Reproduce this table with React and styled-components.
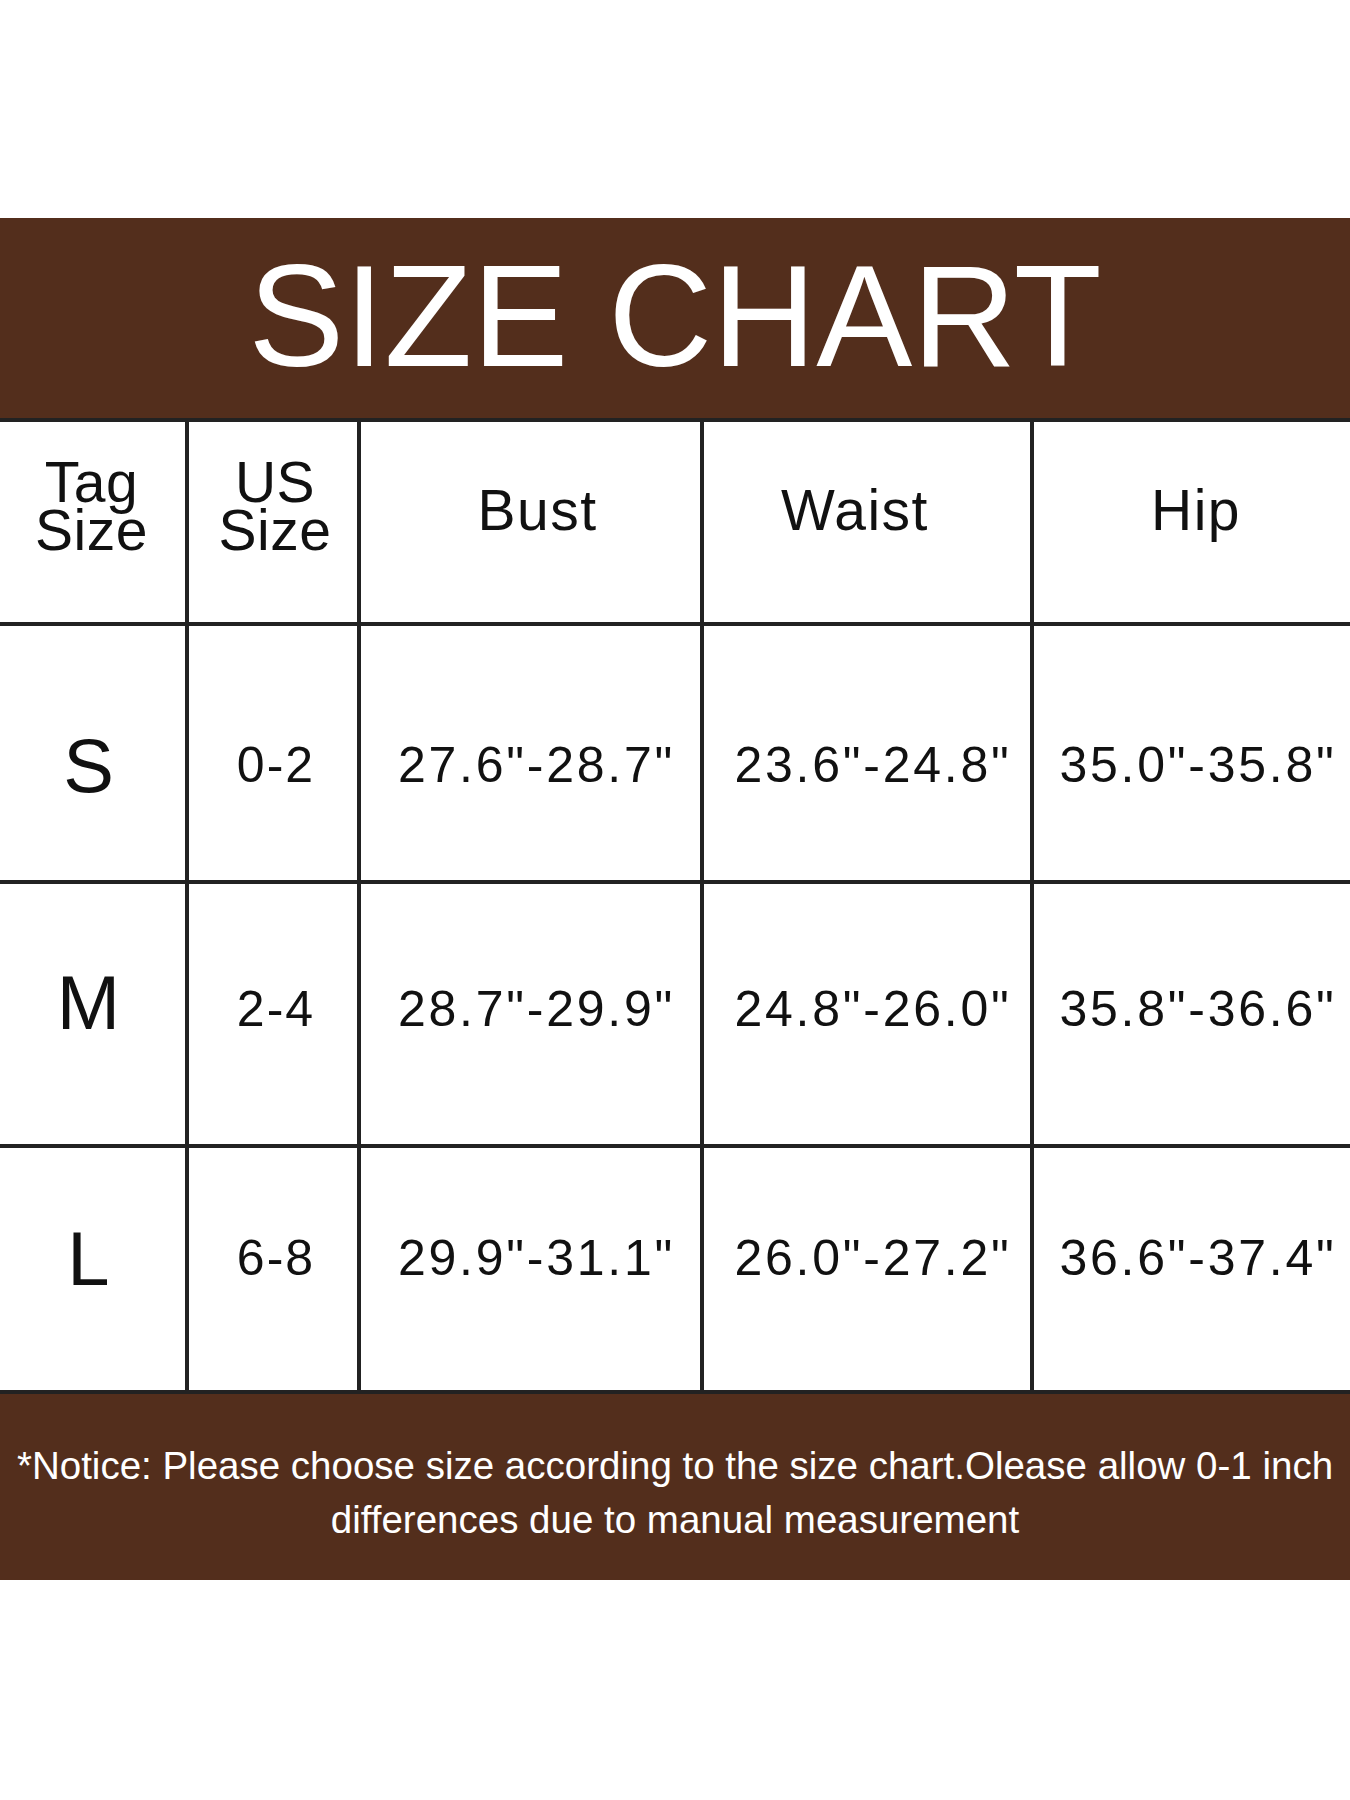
import React from 'react';
import styled, { createGlobalStyle } from 'styled-components';

const GlobalStyle = createGlobalStyle`
  body {
    margin: 0;
    background: #ffffff;
    font-family: 'Liberation Sans', Arial, sans-serif;
  }
`;

const BROWN = '#532e1c';
const LINE = '#222222';

const Page = styled.div`
  width: 1350px;
  height: 1800px;
  padding-top: 218px;
  box-sizing: border-box;
  background: #ffffff;
`;

const TitleBar = styled.div`
  height: 200px;
  background: ${BROWN};
  display: flex;
  align-items: center;
  justify-content: center;
`;

const Title = styled.h1`
  margin: 0;
  color: #ffffff;
  font-weight: 400;
  font-size: 144px;
  line-height: 1;
  padding-bottom: 2px;
`;

const Grid = styled.div`
  display: grid;
  grid-template-columns: 185px 168px 339px 326px 1fr;
  grid-template-rows: 200px 254px 260px 242px;
  gap: 4px;
  padding: 4px 0;
  background: ${LINE};
`;

// $shift moves the text up/down, $dx left/right (px, centre offset)
const Cell = styled.div`
  background: #ffffff;
  color: #111111;
  display: flex;
  align-items: center;
  justify-content: center;
  text-align: center;
  box-sizing: border-box;
  padding-top: ${(p) => (p.$shift > 0 ? p.$shift * 2 : 0)}px;
  padding-bottom: ${(p) => (p.$shift < 0 ? -p.$shift * 2 : 0)}px;
  padding-left: ${(p) => (p.$dx > 0 ? p.$dx * 2 : 0)}px;
  padding-right: ${(p) => (p.$dx < 0 ? -p.$dx * 2 : 0)}px;
  font-size: ${(p) => p.$size}px;
  line-height: ${(p) => (p.$stack ? '48px' : 1.15)};
  letter-spacing: ${(p) => p.$track || 0}px;
  white-space: pre-line;
`;

const Footer = styled.div`
  height: 186px;
  background: ${BROWN};
  box-sizing: border-box;
  padding-top: 45px;
  text-align: center;
  color: #ffffff;
  font-size: 38.5px;
  line-height: 54px;
`;

const header = [
  { text: 'Tag\nSize', stack: true, shift: -16, dx: -1, size: 57, track: 0.5 },
  { text: 'US\nSize', stack: true, shift: -16, dx: 2, size: 57, track: 0.5 },
  { text: 'Bust', shift: -11, dx: 7, size: 57, track: 1.5 },
  { text: 'Waist', shift: -11, dx: -12, size: 57, track: 1.5 },
  { text: 'Hip', shift: -11, dx: 4, size: 57, track: 1.5 },
];

const rows = [
  { tag: 'S', us: '0-2', values: ['27.6"-28.7"', '23.6"-24.8"', '35.0"-35.8"'], tagShift: 13, shift: 13 },
  { tag: 'M', us: '2-4', values: ['28.7"-29.9"', '24.8"-26.0"', '35.8"-36.6"'], tagShift: -11, shift: -4 },
  { tag: 'L', us: '6-8', values: ['29.9"-31.1"', '26.0"-27.2"', '36.6"-37.4"'], tagShift: -10, shift: -10 },
];

export default function App() {
  return (
    <>
      <GlobalStyle />
      <Page>
        <TitleBar>
          <Title>SIZE CHART</Title>
        </TitleBar>
        <Grid>
          {header.map((h) => (
            <Cell
              key={h.text}
              $size={h.size}
              $stack={h.stack}
              $shift={h.shift}
              $dx={h.dx}
              $track={h.track}
            >
              {h.text}
            </Cell>
          ))}
          {rows.map((r) => (
            <React.Fragment key={r.tag}>
              <Cell $size={76} $shift={r.tagShift} $dx={-4}>
                {r.tag}
              </Cell>
              <Cell $size={50} $shift={r.shift} $dx={3} $track={2}>
                {r.us}
              </Cell>
              {r.values.map((v) => (
                <Cell key={v} $size={50} $shift={r.shift} $dx={6} $track={2.75}>
                  {v}
                </Cell>
              ))}
            </React.Fragment>
          ))}
        </Grid>
        <Footer>
          *Notice: Please choose size according to the size chart.Olease allow 0-1 inch
          <br />
          differences due to manual measurement
        </Footer>
      </Page>
    </>
  );
}
